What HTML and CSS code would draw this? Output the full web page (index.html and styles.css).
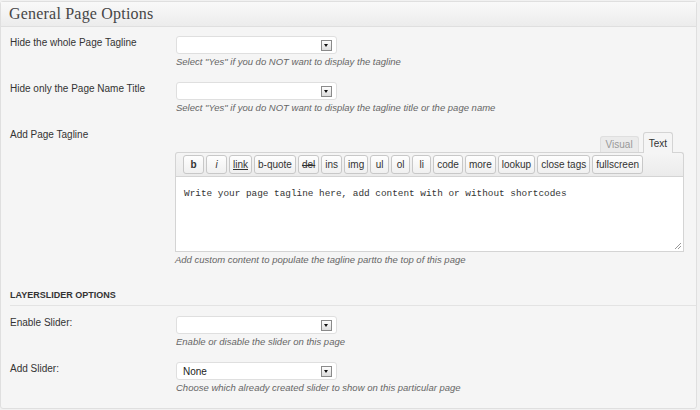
FILE: index.html
```html
<!DOCTYPE html>
<html>
<head>
<meta charset="utf-8">
<link rel="stylesheet" href="styles.css">
</head>
<body>
<div class="panel">
  <div class="panel-head"><h3 class="panel-title">General Page Options</h3></div>

  <div class="row">
    <div class="label">Hide the whole Page Tagline</div>
    <div class="field">
      <div class="select"><span class="value"></span><span class="arrow"></span></div>
      <div class="desc">Select "Yes" if you do NOT want to display the tagline</div>
    </div>
  </div>

  <div class="row">
    <div class="label">Hide only the Page Name Title</div>
    <div class="field">
      <div class="select"><span class="value"></span><span class="arrow"></span></div>
      <div class="desc">Select "Yes" if you do NOT want to display the tagline title or the page name</div>
    </div>
  </div>

  <div class="row">
    <div class="label">Add Page Tagline</div>
    <div class="field editor">
      <div class="tabs">
        <span class="tab">Visual</span>
        <span class="tab active">Text</span>
      </div>
      <div class="toolbar">
        <span class="btn b">b</span>
        <span class="btn i">i</span>
        <span class="btn link">link</span>
        <span class="btn">b-quote</span>
        <span class="btn del">del</span>
        <span class="btn">ins</span>
        <span class="btn">img</span>
        <span class="btn">ul</span>
        <span class="btn">ol</span>
        <span class="btn">li</span>
        <span class="btn">code</span>
        <span class="btn">more</span>
        <span class="btn">lookup</span>
        <span class="btn">close tags</span>
        <span class="btn">fullscreen</span>
      </div>
      <div class="textarea">Write your page tagline here, add content with or without shortcodes
        <svg class="grip" width="8" height="8" viewBox="0 0 8 8"><path d="M7 1L1 7M7 4L4 7" stroke="#999" stroke-width="1"/></svg>
      </div>
      <div class="desc">Add custom content to populate the tagline partto the top of this page</div>
    </div>
  </div>

  <div class="section-title">LAYERSLIDER OPTIONS</div>

  <div class="row row-first">
    <div class="label">Enable Slider:</div>
    <div class="field">
      <div class="select"><span class="value"></span><span class="arrow"></span></div>
      <div class="desc">Enable or disable the slider on this page</div>
    </div>
  </div>

  <div class="row row-last">
    <div class="label">Add Slider:</div>
    <div class="field">
      <div class="select"><span class="value">None</span><span class="arrow"></span></div>
      <div class="desc">Choose which already created slider to show on this particular page</div>
    </div>
  </div>
</div>
</body>
</html>
```

FILE: styles.css
```css
body {
  margin: 0;
  background: #f1f1f1;
  font-family: "Liberation Sans", Arial, sans-serif;
  color: #333;
}

.panel {
  width: 697px;
  box-sizing: border-box;
  margin-top: 1px;
  border: 1px solid #dfdfdf;
  border-radius: 3px;
  background: #f5f5f5;
}

.panel-head {
  height: 24px;
  border-bottom: 1px solid #dfdfdf;
  background: linear-gradient(#f9f9f9, #ececec);
  padding-left: 8px;
  display: flex;
  align-items: center;
}

.panel-title {
  margin: 0;
  font-family: "Liberation Serif", "Times New Roman", serif;
  font-weight: normal;
  font-size: 16px;
  letter-spacing: 0.2px;
  color: #464646;
}

.row {
  display: grid;
  grid-template-columns: 166px 1fr;
  padding: 9px 10px 4px 9px;
}

.row-first { padding-top: 10px; }
.row-last { padding-bottom: 13px; }

.label {
  font-size: 10px;
  line-height: 14px;
  color: #333;
}

.field {
  display: flex;
  flex-direction: column;
}

.select {
  width: 161px;
  height: 18px;
  box-sizing: border-box;
  border: 1px solid #dfdfdf;
  border-radius: 3px;
  background: #fff;
  display: flex;
  align-items: center;
  padding: 0 4px 0 6px;
  font-size: 10px;
  color: #222;
}

.arrow {
  margin-left: auto;
  width: 11px;
  height: 11px;
  box-sizing: border-box;
  border: 1px solid #8a8a8a;
  background: linear-gradient(#fdfdfd, #dcdcdc);
  position: relative;
}

.arrow::after {
  content: "";
  position: absolute;
  left: 2px;
  top: 3px;
  border-left: 2.5px solid transparent;
  border-right: 2.5px solid transparent;
  border-top: 3px solid #111;
}

.desc {
  margin-top: 1px;
  font-size: 9.5px;
  line-height: 14px;
  font-style: italic;
  color: #666;
}

.editor {
  width: 509px;
  margin-left: -1px;
  margin-top: 4px;
}

.tabs {
  display: flex;
  justify-content: flex-end;
  align-items: flex-end;
  gap: 4px;
  padding-right: 11px;
  height: 21px;
  margin-bottom: -1px;
  position: relative;
}

.tab {
  font-size: 10px;
  padding: 0 5px;
  box-sizing: border-box;
  border: 1px solid #dfdfdf;
  border-bottom: none;
  border-radius: 3px 3px 0 0;
  display: flex;
  align-items: center;
}

.tab:not(.active) {
  height: 16px;
  color: #999;
  background: #ebebeb;
  margin-bottom: 1px;
}

.tab.active {
  height: 21px;
  color: #333;
  background: #f5f5f5;
  border-color: #d4d4d4;
}

.toolbar {
  border: 1px solid #d4d4d4;
  border-bottom: none;
  border-radius: 3px 3px 0 0;
  background: linear-gradient(#f5f5f5, #ebebeb);
  padding: 2px 7px 2px 7px;
  display: flex;
  gap: 2px;
}

.btn {
  height: 19px;
  min-width: 19px;
  box-sizing: border-box;
  padding: 0 3px;
  border: 1px solid #c8c8c8;
  border-radius: 3px;
  background: linear-gradient(#fefefe, #f0f0f0);
  font-size: 10px;
  color: #333;
  display: flex;
  align-items: center;
  justify-content: center;
}

.btn.b, .btn.i { min-width: 21px; }
.btn.b { font-weight: bold; }
.btn.i { font-style: italic; }
.btn.link { text-decoration: underline; }
.btn.del { text-decoration: line-through; }

.textarea {
  height: 76px;
  box-sizing: border-box;
  border: 1px solid #d4d4d4;
  background: #fff;
  padding: 10px 8px;
  font-family: "Liberation Mono", "Courier New", monospace;
  font-size: 9.4px;
  line-height: 14px;
  color: #333;
  position: relative;
}

.grip {
  position: absolute;
  right: 1px;
  bottom: 1px;
}

.section-title {
  margin-left: 9px;
  padding: 17px 0 3px 0;
  border-bottom: 1px solid #e3e3e3;
  font-size: 9px;
  font-weight: bold;
  line-height: 14px;
  color: #333;
}
```
